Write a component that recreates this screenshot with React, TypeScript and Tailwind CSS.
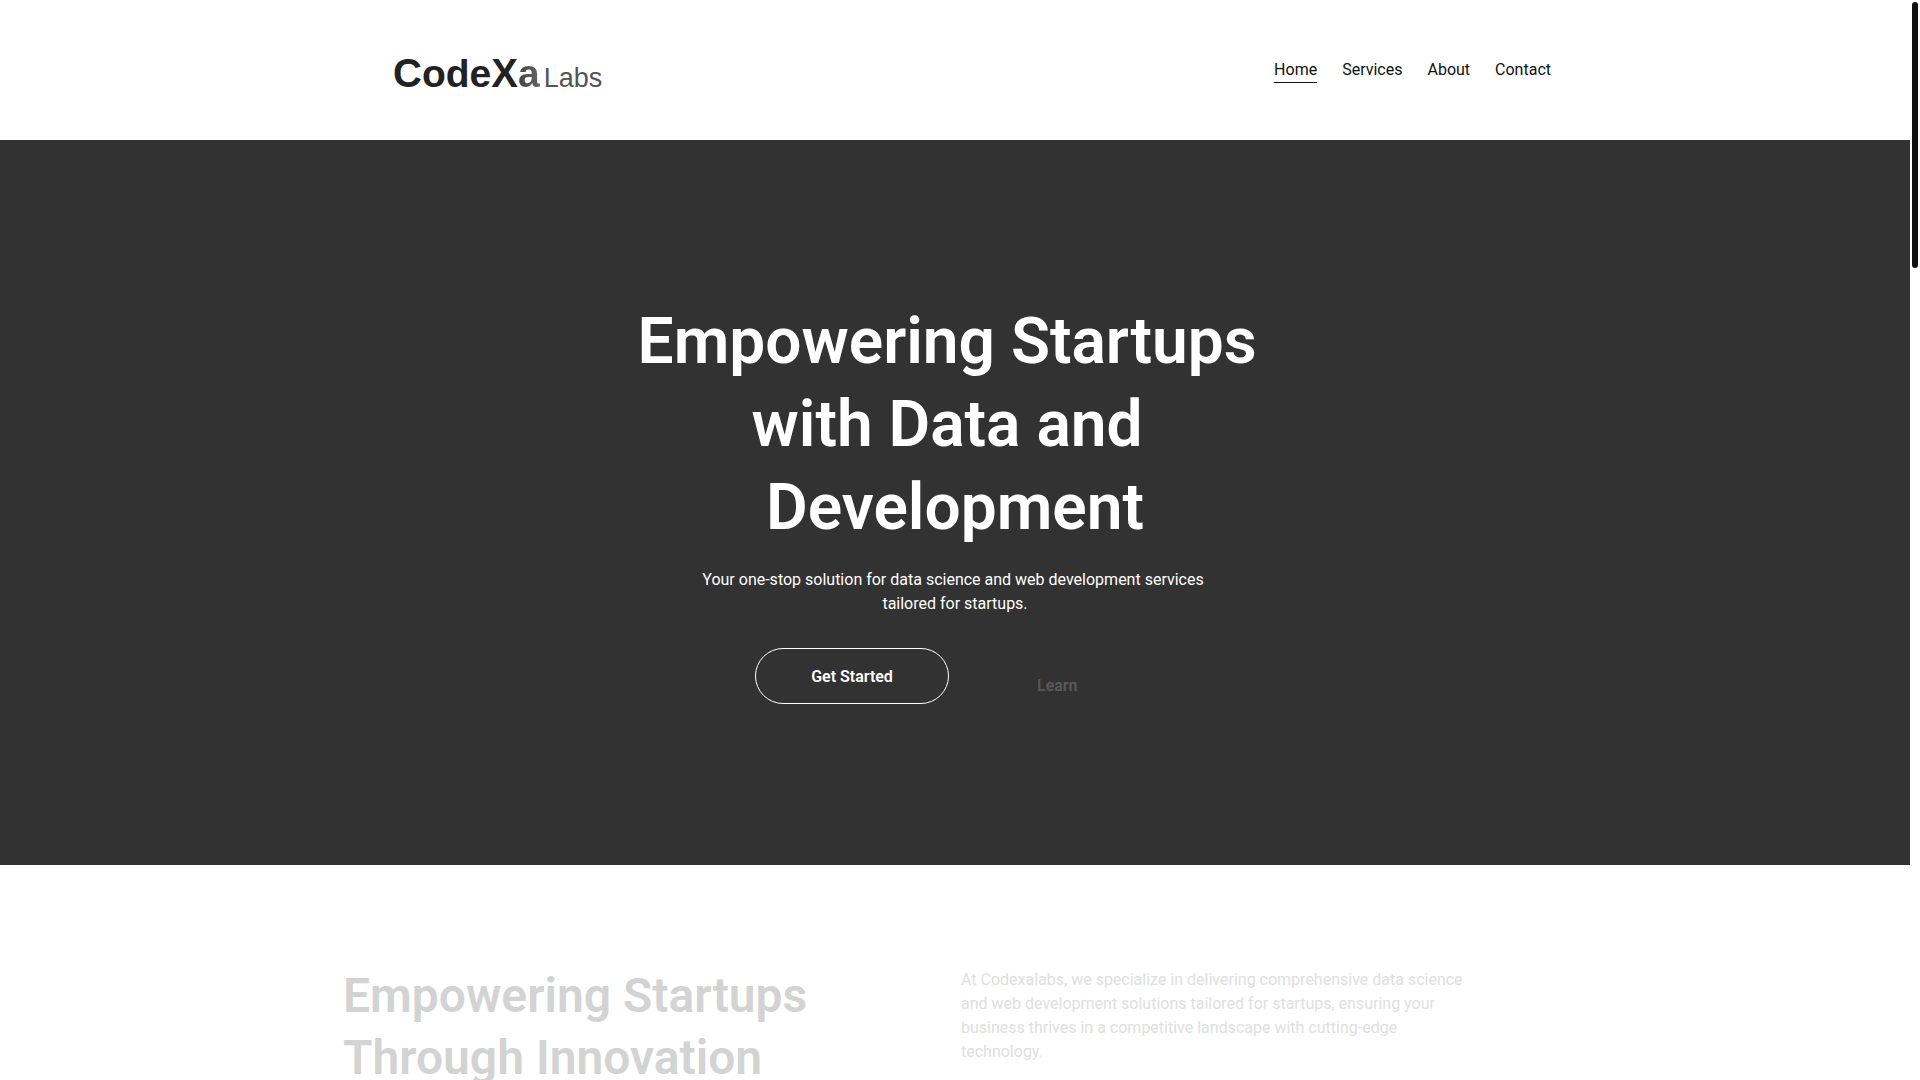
import React from "react";

const links = [
  { label: "Home", href: "#home", active: true },
  { label: "Services", href: "#services" },
  { label: "About", href: "#about" },
  { label: "Contact", href: "#contact" },
];

function Logo() {
  return (
    <a
      href="#home"
      className="flex items-baseline gap-1 pl-[34px] pt-[11px] font-['Liberation_Sans',sans-serif] leading-[48px] text-[#222]"
    >
      <span className="text-[39px] font-bold">
        <span className="text-[40px]">C</span>ode<span className="text-[40px]">X</span>
        <span className="bg-gradient-to-r from-[#444] to-[#666] bg-clip-text text-transparent">a</span>
      </span>
      <span className="text-[27px] text-[#555]">Labs</span>
    </a>
  );
}

function Header() {
  return (
    <header className="bg-white px-6">
      <div className="mx-auto flex h-[140px] max-w-[1192px] items-center justify-between">
        <Logo />
        <nav className="flex gap-[25px]">
          {links.map((link) => (
            <a
              key={link.label}
              href={link.href}
              className={
                link.active
                  ? "border-b border-[#0d1216] text-base"
                  : "border-b border-transparent text-base"
              }
            >
              {link.label}
            </a>
          ))}
        </nav>
      </div>
    </header>
  );
}

function Hero() {
  return (
    <section id="home" className="bg-[#323232] px-6 pb-[161px] pt-40 text-center text-white">
      <h1 className="text-[64px] font-semibold leading-[83px]">
        Empowering Startups&nbsp;
        <br />
        with Data and&nbsp;
        <br />
        Development
      </h1>
      <p className="mt-[19px] text-base">
        Your one-stop solution for data science and web development services&nbsp;
        <br />
        tailored for startups.
      </p>
      <div className="mt-8 flex justify-center gap-5 text-base font-semibold">
        <button type="button" className="h-14 w-[194px] rounded-full border border-white pt-0.5">
          Get Started
        </button>
        <button type="button" className="h-14 w-[186px] pl-[68px] pt-5 text-left text-white/20">
          Learn
        </button>
      </div>
    </section>
  );
}

function Intro() {
  return (
    <section id="about" className="px-6 py-[100px]">
      <div className="mx-auto grid max-w-[1224px] grid-cols-2 gap-3">
        <h2 className="text-5xl font-semibold leading-[62px] text-[#d3d3d3]">
          Empowering Startups Through Innovation
        </h2>
        <p className="max-w-[514px] pt-[3px] text-base text-[#e0e0e0]">
          At Codexalabs, we specialize in delivering comprehensive data science and web development
          solutions tailored for startups, ensuring your business thrives in a competitive landscape
          with cutting-edge technology.
        </p>
      </div>
    </section>
  );
}

export default function App() {
  return (
    <div className="flex h-screen overflow-hidden bg-white font-[Roboto,sans-serif] text-[#0d1216]">
      <main className="min-w-0 flex-1">
        <Header />
        <Hero />
        <Intro />
      </main>
      <div className="w-[10px] p-0.5">
        <div className="h-[266px] rounded-full bg-[#111]"></div>
      </div>
    </div>
  );
}
